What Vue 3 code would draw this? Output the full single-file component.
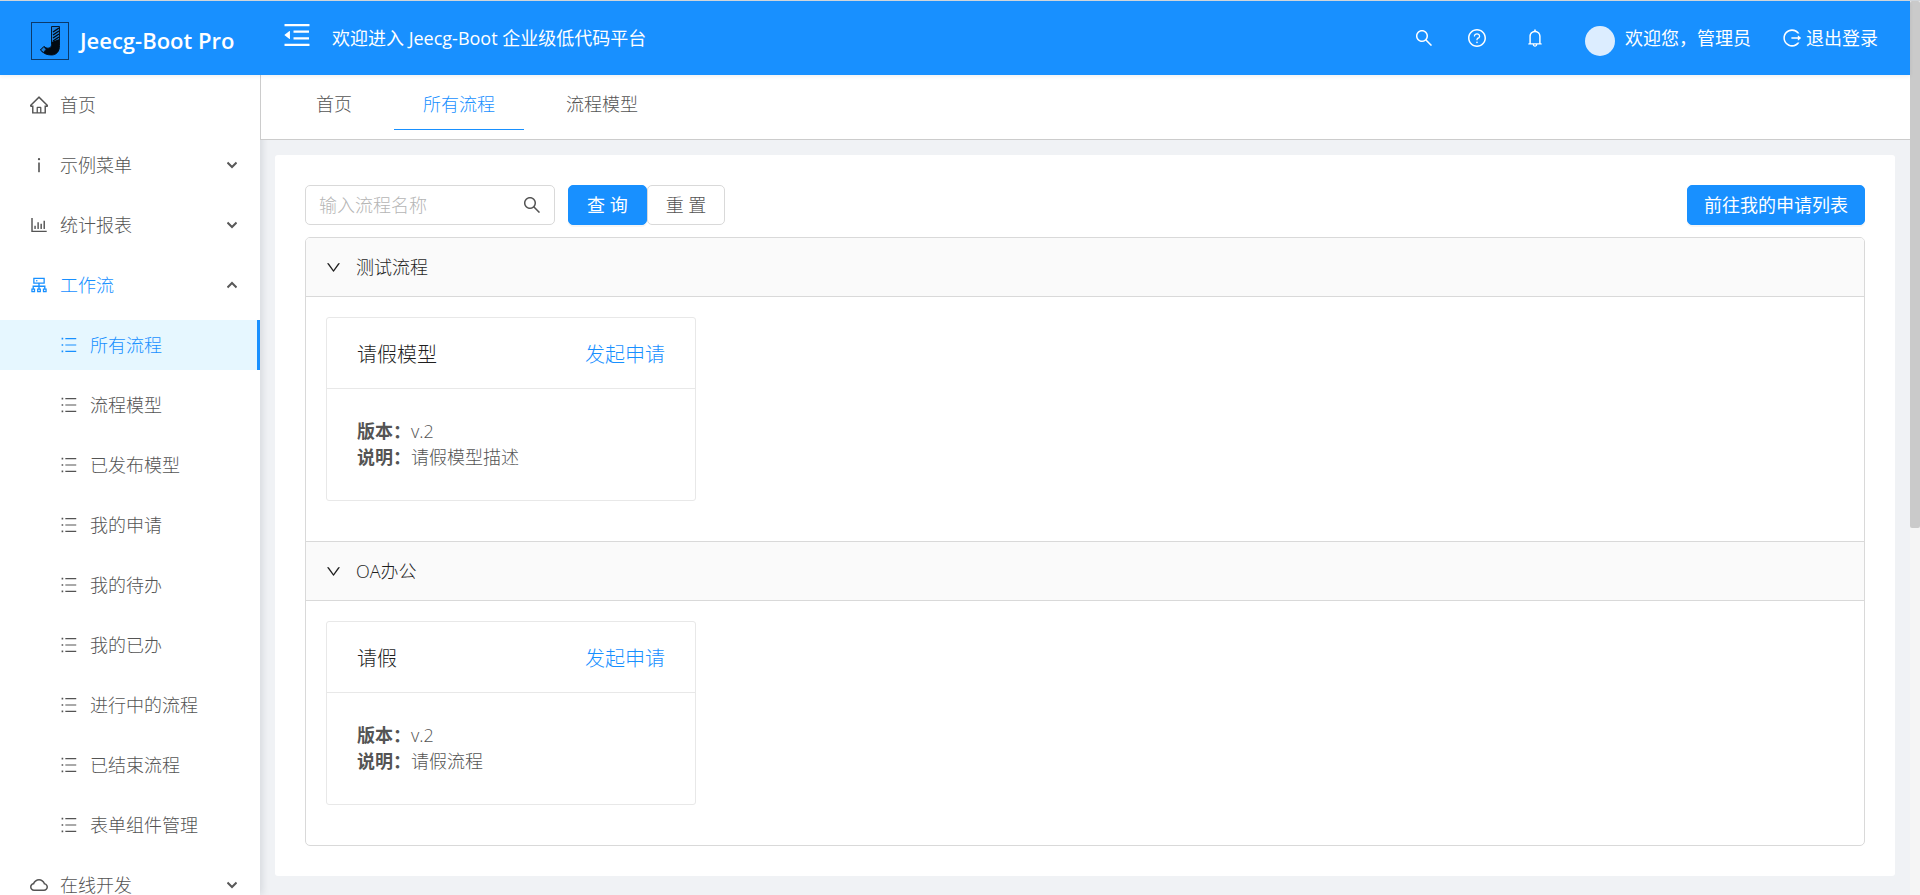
<script setup>
import { ref } from 'vue'

const icons = {
  search: 'M909.6 854.5L649.9 594.8C690.2 542.7 712 479 712 412c0-80.2-31.3-155.4-87.9-212.1-56.6-56.7-132-87.9-212.1-87.9s-155.5 31.3-212.1 87.9C143.2 256.5 112 331.8 112 412c0 80.1 31.3 155.5 87.9 212.1C256.5 680.8 331.8 712 412 712c67 0 130.6-21.8 182.7-62l259.7 259.6a8.2 8.2 0 0 0 11.6 0l43.6-43.5a8.2 8.2 0 0 0 0-11.6zM570.4 570.4C528 612.7 471.8 636 412 636s-116-23.3-158.4-65.6C211.3 528 188 471.8 188 412s23.3-116.1 65.6-158.4C296 211.3 352.2 188 412 188s116.1 23.2 158.4 65.6S636 352.2 636 412s-23.3 116.1-65.6 158.4z',
  question: 'M512 64C264.6 64 64 264.6 64 512s200.6 448 448 448 448-200.6 448-448S759.4 64 512 64zm0 820c-205.4 0-372-166.6-372-372s166.6-372 372-372 372 166.6 372 372-166.6 372-372 372zM623.6 316.7C593.6 290.4 554 276 512 276s-81.6 14.5-111.6 40.7C369.2 344 352 380.7 352 420v7.6c0 4.4 3.6 8 8 8h48c4.4 0 8-3.6 8-8V420c0-44.1 43.1-80 96-80s96 35.9 96 80c0 31.1-22 59.6-56.1 72.7-21.2 8.1-39.2 22.3-52.1 40.9-13.1 19-19.9 41.8-19.9 64.9V620c0 4.4 3.6 8 8 8h48c4.4 0 8-3.6 8-8v-22.7a48.3 48.3 0 0 1 30.9-44.8c59-22.7 97.1-74.7 97.1-132.5.1-39.3-17.1-76-48.3-103.3zM472 732a40 40 0 1 0 80 0 40 40 0 1 0-80 0z',
  bell: 'M816 768h-24V428c0-141.1-104.3-257.8-240-277.2V112c0-22.1-17.9-40-40-40s-40 17.9-40 40v38.8C336.3 170.2 232 286.9 232 428v340h-24c-17.7 0-32 14.3-32 32v32c0 4.4 3.6 8 8 8h216c0 61.8 50.2 112 112 112s112-50.2 112-112h216c4.4 0 8-3.6 8-8v-32c0-17.7-14.3-32-32-32zM512 888c-26.5 0-48-21.5-48-48h96c0 26.5-21.5 48-48 48zM304 768V428c0-55.6 21.6-107.8 60.9-147.1S456.4 220 512 220c55.6 0 107.8 21.6 147.1 60.9S720 372.4 720 428v340H304z',
  logout: 'M868 732h-70.3c-4.8 0-9.3 2.1-12.3 5.8-7 8.5-14.5 16.7-22.4 24.5a353.84 353.84 0 0 1-112.7 75.9A352.8 352.8 0 0 1 512.4 866c-47.9 0-94.3-9.4-137.9-27.8a353.84 353.84 0 0 1-112.7-75.9 353.28 353.28 0 0 1-76-112.5C167.3 606.2 158 559.9 158 512s9.4-94.2 27.8-137.8c17.8-42.1 43.4-80 76-112.5s70.5-58.1 112.7-75.9c43.6-18.4 90-27.8 137.9-27.8 47.9 0 94.3 9.3 137.9 27.8 42.2 17.8 80.1 43.4 112.7 75.9 7.9 7.9 15.3 16.1 22.4 24.5 3 3.7 7.6 5.8 12.3 5.8H868c6.3 0 10.2-7 6.7-12.3C798 160.5 663.8 81.6 511.3 82 271.7 82.6 79.6 277.1 82 516.4 84.4 751.9 276.2 942 512.4 942c152.1 0 285.7-78.8 362.3-197.7 3.4-5.3-.4-12.3-6.7-12.3zm88.9-226.3L815 393.7c-5.3-4.2-13-.4-13 6.3v76H488c-4.4 0-8 3.6-8 8v56c0 4.4 3.6 8 8 8h314v76c0 6.7 7.8 10.5 13 6.3l141.9-112a8 8 0 0 0 0-12.6z',
  fold: 'M408 442h480c4.4 0 8-3.6 8-8v-56c0-4.4-3.6-8-8-8H408c-4.4 0-8 3.6-8 8v56c0 4.4 3.6 8 8 8zm-8 204c0 4.4 3.6 8 8 8h480c4.4 0 8-3.6 8-8v-56c0-4.4-3.6-8-8-8H408c-4.4 0-8 3.6-8 8v56zm504-486H120c-4.4 0-8 3.6-8 8v56c0 4.4 3.6 8 8 8h784c4.4 0 8-3.6 8-8v-56c0-4.4-3.6-8-8-8zm0 632H120c-4.4 0-8 3.6-8 8v56c0 4.4 3.6 8 8 8h784c4.4 0 8-3.6 8-8v-56c0-4.4-3.6-8-8-8zM115.4 518.9L271.7 642c5.8 4.6 14.4.5 14.4-6.9V388.9c0-7.4-8.5-11.5-14.4-6.9L115.4 505.1a8.74 8.74 0 0 0 0 13.8z',
  home: 'M946.5 505L560.1 118.8l-25.9-25.9a31.5 31.5 0 0 0-44.4 0L77.5 505a63.9 63.9 0 0 0-18.8 46c.4 35.2 29.7 63.3 64.9 63.3h42.5V940h691.8V614.3h43.4c17.1 0 33.2-6.7 45.3-18.8a63.6 63.6 0 0 0 18.7-45.3c0-17-6.7-33.1-18.8-45.2zM568 868H456V664h112v204zm217.9-325.7V868H632V640c0-22.1-17.9-40-40-40H432c-22.1 0-40 17.9-40 40v228H238.1V542.3h-96l370-369.7 23.1 23.1L882 542.3h-96.1z',
  info: 'M456 224a56 56 0 1 0 112 0 56 56 0 1 0-112 0zm88 168h-64c-4.4 0-8 3.6-8 8v464c0 4.4 3.6 8 8 8h64c4.4 0 8-3.6 8-8V400c0-4.4-3.6-8-8-8z',
  chart: 'M888 792H200V168c0-4.4-3.6-8-8-8h-56c-4.4 0-8 3.6-8 8v688c0 4.4 3.6 8 8 8h752c4.4 0 8-3.6 8-8v-56c0-4.4-3.6-8-8-8zm-600-80h56c4.4 0 8-3.6 8-8V560c0-4.4-3.6-8-8-8h-56c-4.4 0-8 3.6-8 8v144c0 4.4 3.6 8 8 8zm152 0h56c4.4 0 8-3.6 8-8V384c0-4.4-3.6-8-8-8h-56c-4.4 0-8 3.6-8 8v320c0 4.4 3.6 8 8 8zm152 0h56c4.4 0 8-3.6 8-8V462c0-4.4-3.6-8-8-8h-56c-4.4 0-8 3.6-8 8v242c0 4.4 3.6 8 8 8zm152 0h56c4.4 0 8-3.6 8-8V304c0-4.4-3.6-8-8-8h-56c-4.4 0-8 3.6-8 8v400c0 4.4 3.6 8 8 8z',
  cluster: 'M888 680h-54V540H546v-92h238c8.8 0 16-7.2 16-16V168c0-8.8-7.2-16-16-16H240c-8.8 0-16 7.2-16 16v264c0 8.8 7.2 16 16 16h238v92H190v140h-54c-4.4 0-8 3.6-8 8v176c0 4.4 3.6 8 8 8h176c4.4 0 8-3.6 8-8V688c0-4.4-3.6-8-8-8h-54v-72h220v72h-54c-4.4 0-8 3.6-8 8v176c0 4.4 3.6 8 8 8h176c4.4 0 8-3.6 8-8V688c0-4.4-3.6-8-8-8h-54v-72h220v72h-54c-4.4 0-8 3.6-8 8v176c0 4.4 3.6 8 8 8h176c4.4 0 8-3.6 8-8V688c0-4.4-3.6-8-8-8zM256 808h-64v-64h64v64zm288 0h-64v-64h64v64zM288 384V216h448v168H288zm544 424h-64v-64h64v64zM360 300a40 40 0 1 0 80 0 40 40 0 1 0-80 0z',
  cloud: 'M811.4 418.7C765.6 297.9 648.9 212 512.2 212S258.8 297.8 213 418.6C127.3 441.1 64 519.1 64 612c0 110.5 89.5 200 199.9 200h496.2C870.5 812 960 722.5 960 612c0-92.7-63.1-170.7-148.6-193.3zm36.3 281a123.07 123.07 0 0 1-87.6 36.3H263.9c-33.1 0-64.2-12.9-87.6-36.3A123.3 123.3 0 0 1 140 612c0-28 9.1-54.3 26.2-76.3a125.7 125.7 0 0 1 66.1-43.7l37.9-9.9 13.9-36.6c8.6-22.8 20.6-44.1 35.7-63.4a245.6 245.6 0 0 1 52.4-49.9c41.1-28.9 89.5-44.2 140-44.2s98.9 15.3 140 44.2c19.9 14 37.5 30.8 52.4 49.9 15.1 19.3 27.1 40.7 35.7 63.4l13.8 36.5 37.8 10c54.3 14.5 92.1 63.8 92.1 120 0 33.1-12.9 64.3-36.3 87.7z',
  list: 'M872 168H330v56h542zM872 484H330v56h542zM872 800H330v56h542zM144 156h80v80h-80zM144 472h80v80h-80zM144 788h80v80h-80z',
  down: 'M884 256h-75c-5.1 0-9.9 2.5-12.9 6.6L512 654.2 227.9 262.6c-3-4.1-7.8-6.6-12.9-6.6h-75c-6.5 0-10.3 7.4-6.5 12.7l352.6 486.1c12.8 17.6 39 17.6 51.7 0l352.6-486.1c3.9-5.3.1-12.7-6.4-12.7z'
}

const menu = [
  { label: '首页', icon: 'home' },
  { label: '示例菜单', icon: 'info', arrow: 'down' },
  { label: '统计报表', icon: 'chart', arrow: 'down' },
  { label: '工作流', icon: 'cluster', arrow: 'up', open: true },
  { label: '所有流程', icon: 'list', sub: true, selected: true },
  { label: '流程模型', icon: 'list', sub: true },
  { label: '已发布模型', icon: 'list', sub: true },
  { label: '我的申请', icon: 'list', sub: true },
  { label: '我的待办', icon: 'list', sub: true },
  { label: '我的已办', icon: 'list', sub: true },
  { label: '进行中的流程', icon: 'list', sub: true },
  { label: '已结束流程', icon: 'list', sub: true },
  { label: '表单组件管理', icon: 'list', sub: true },
  { label: '在线开发', icon: 'cloud', arrow: 'down' }
]

const tabs = ['首页', '所有流程', '流程模型']
const activeTab = ref('所有流程')
const keyword = ref('')

const groups = [
  { name: '测试流程', items: [{ title: '请假模型', version: 'v.2', desc: '请假模型描述' }] },
  { name: 'OA办公', items: [{ title: '请假', version: 'v.2', desc: '请假流程' }] }
]
</script>

<template>
  <div class="window">
    <div class="page">
      <header class="header">
        <a class="brand" href="#">
          <svg class="logo" viewBox="0 0 38 38" aria-hidden="true">
            <rect x="0.5" y="0.5" width="37" height="37" fill="none" stroke="#0b3a6b" />
            <path d="M20.5 4.5h8v19c0 6-3 9.5-8 9.5-4.5 0-8-1.5-11-5l3.500-3.500c2 1.5 3.500 2 5 1.500 1.700-.5 2.500-1.500 2.500-3.500z" fill="#1b80de" stroke="#06182b" />
            <path d="M20.5 20l8-3v7c0 5.500-3 9-8 9-4.500 0-7-1-9.500-3.500l3-4.500c2 1.500 3 1.500 4.500 1 1.500-.6 2-1.800 2-3.500z" fill="#020a12" />
            <path d="M22 10l6-4M22 13l6-4M22 16l6-4M22 19l6-4" stroke="#020a12" stroke-width="1.5" />
            <path d="M9.5 28l3.500-3.500 2 3-2.500 3z" fill="#1b80de" stroke="#06182b" />
          </svg>
          <span>Jeecg-Boot Pro</span>
        </a>
        <button class="fold" type="button" aria-label="收起菜单">
          <svg viewBox="64 64 896 896"><path :d="icons.fold" /></svg>
        </button>
        <span class="welcome">欢迎进入 Jeecg-Boot 企业级低代码平台</span>
        <div class="tools">
          <button class="tool" type="button" aria-label="搜索"><svg viewBox="64 64 896 896"><path :d="icons.search" /></svg></button>
          <a class="tool help" href="#" aria-label="帮助"><svg viewBox="64 64 896 896"><path :d="icons.question" /></svg></a>
          <button class="tool notice" type="button" aria-label="通知"><svg viewBox="64 64 896 896"><path :d="icons.bell" /></svg></button>
          <span class="avatar"></span>
          <span class="user">欢迎您，管理员</span>
          <a class="logout" href="#"><svg viewBox="64 64 896 896"><path :d="icons.logout" /></svg>退出登录</a>
        </div>
      </header>

      <div class="body">
        <nav class="sider">
          <a
            v-for="m in menu"
            :key="m.label + m.icon"
            href="#"
            class="item"
            :class="{ sub: m.sub, selected: m.selected, open: m.open }"
          >
            <svg class="item-icon" viewBox="64 64 896 896"><path :d="icons[m.icon]" /></svg>
            <span>{{ m.label }}</span>
            <svg v-if="m.arrow" class="chevron" viewBox="0 0 10 8">
              <path :d="m.arrow === 'down' ? 'M.5 1.5L5 6l4.5-4.5' : 'M.5 6.5L5 2l4.5 4.5'" />
            </svg>
          </a>
        </nav>

        <div class="content">
          <div class="tabs" role="tablist">
            <button
              v-for="t in tabs"
              :key="t"
              type="button"
              role="tab"
              class="tab"
              :class="{ active: t === activeTab }"
              :aria-selected="t === activeTab"
              @click="activeTab = t"
            >{{ t }}</button>
          </div>

          <main class="panel">
            <form class="toolbar" @submit.prevent>
              <label class="search">
                <input v-model="keyword" type="text" placeholder="输入流程名称" aria-label="流程名称" />
                <svg viewBox="64 64 896 896"><path :d="icons.search" /></svg>
              </label>
              <button class="btn primary" type="submit">查 询</button>
              <button class="btn" type="reset">重 置</button>
              <button class="btn primary apply" type="button">前往我的申请列表</button>
            </form>

            <div class="collapse">
              <section v-for="g in groups" :key="g.name" class="group">
                <button class="group-head" type="button" aria-expanded="true">
                  <svg viewBox="64 64 896 896"><path :d="icons.down" /></svg>
                  <span>{{ g.name }}</span>
                </button>
                <div class="group-body">
                  <article v-for="c in g.items" :key="c.title" class="card">
                    <div class="card-head">
                      <span>{{ c.title }}</span>
                      <a href="#">发起申请</a>
                    </div>
                    <div class="card-body">
                      <div><b>版本：</b>{{ c.version }}</div>
                      <div><b>说明：</b>{{ c.desc }}</div>
                    </div>
                  </article>
                </div>
              </section>
            </div>
          </main>
        </div>
      </div>
    </div>
    <div class="scrollbar"><div class="thumb"></div></div>
  </div>
</template>

<style>
body {
  overflow: hidden;
}
</style>

<style scoped>
.window {
  display: flex;
  height: 100vh;
  overflow: hidden;
  box-sizing: border-box;
  border-top: 1px solid #d0d5da;
  background: #f0f2f5;
  color: #545454;
  font-family: "Open Sans", "Noto Sans CJK SC", sans-serif;
  font-size: 18px;
  font-weight: 300;
  line-height: 26px;
}
.window *,
.window *::before {
  box-sizing: border-box;
}
button,
input {
  font: inherit;
  color: inherit;
  border: 0;
  padding: 0;
  background: none;
}
a {
  color: inherit;
  text-decoration: none;
}
svg {
  display: block;
  flex: none;
  fill: currentColor;
}
.page {
  flex: 1;
  min-width: 0;
  display: flex;
  flex-direction: column;
}
.scrollbar {
  width: 10px;
  background: #f5f5f5;
}
.thumb {
  height: 59%;
  border-radius: 2px;
  background: #cacaca;
}

/* header */
.header {
  position: relative;
  z-index: 2;
  flex: none;
  display: flex;
  align-items: center;
  height: 74px;
  padding-right: 32px;
  background: #1890ff;
  color: #fff;
  font-weight: 400;
  box-shadow: 0 1px 4px rgba(0, 21, 41, 0.08);
}
.brand {
  display: flex;
  align-items: center;
  gap: 11px;
  width: 252px;
  padding: 6px 0 0 31px;
  font-size: 22px;
  font-weight: 600;
}
.brand span {
  padding-bottom: 2px;
}
.logo {
  width: 38px;
  height: 38px;
}
.fold {
  margin: 0 21px 6px 31px;
}
.fold svg {
  width: 28px;
  height: 28px;
}
.tools {
  display: flex;
  align-items: center;
  margin-left: auto;
}
.tool svg,
.logout svg {
  width: 18px;
  height: 18px;
}
.help {
  margin-left: 35px;
}
.notice {
  margin-left: 40px;
}
.avatar {
  width: 30px;
  height: 30px;
  margin: 6px 10px 0 41px;
  border-radius: 50%;
  background: #dcedff;
}
.logout {
  display: flex;
  align-items: center;
  gap: 5px;
  margin-left: 32px;
}

/* side menu */
.body {
  flex: 1;
  min-height: 0;
  display: flex;
}
.sider {
  position: relative;
  flex: none;
  width: 260px;
  padding-top: 5px;
  background: #fff;
  box-shadow: 2px 0 8px rgba(0, 21, 41, 0.12);
}
.item {
  display: flex;
  align-items: center;
  gap: 12px;
  height: 50px;
  margin-bottom: 10px;
  padding: 0 23px 0 30px;
  line-height: 20px;
}
.item-icon {
  width: 18px;
  height: 18px;
}
.sub {
  padding-left: 60px;
}
.open {
  color: #1890ff;
}
.selected {
  color: #1890ff;
  background: #e6f7ff;
  border-right: 3px solid #1890ff;
}
.chevron {
  width: 10px;
  height: 8px;
  margin-left: auto;
  fill: none;
  stroke: #595959;
  stroke-width: 2;
}

/* tabs */
.content {
  position: relative;
  flex: 1;
  min-width: 0;
}
.tabs {
  position: relative;
  display: flex;
  gap: 13px;
  height: 65px;
  padding: 5px 0 9px 26px;
  background: #fff;
  border-left: 1px solid #ccc;
  border-bottom: 1px solid #ccc;
}
.tab {
  padding: 0 29px 2px;
  border-bottom: 1px solid transparent;
}
.tab.active {
  color: #1890ff;
  border-color: #1890ff;
}

/* panel */
.panel {
  margin: 15px 15px 0;
  padding: 30px;
  background: #fff;
  border-radius: 3px;
}
.toolbar {
  display: flex;
  margin-bottom: 12px;
}
.search {
  display: flex;
  align-items: center;
  width: 250px;
  height: 40px;
  margin-right: 13px;
  padding: 0 13px;
  border: 1px solid #d9d9d9;
  border-radius: 5px;
}
.search input {
  flex: 1;
  min-width: 0;
  outline: none;
}
.search input::placeholder {
  color: #b5b5b5;
  opacity: 1;
}
.search svg {
  width: 18px;
  height: 18px;
}
.btn {
  height: 40px;
  padding: 0 18px;
  border: 1px solid #d9d9d9;
  border-radius: 5px;
  background: #fff;
}
.primary {
  color: #fff;
  font-weight: 400;
  background: #1890ff;
  border-color: #1890ff;
  box-shadow: 0 2px 0 rgba(0, 0, 0, 0.04);
}
.apply {
  margin-left: auto;
  padding: 0 16px;
}
.collapse {
  border: 1px solid #d9d9d9;
  border-radius: 5px;
  overflow: hidden;
}
.group + .group {
  border-top: 1px solid #d9d9d9;
}
.group-head {
  display: flex;
  align-items: center;
  gap: 15px;
  width: 100%;
  height: 59px;
  padding-left: 20px;
  color: #1f1f1f;
  background: #fafafa;
  border-bottom: 1px solid #d9d9d9;
}
.group-head svg {
  width: 15px;
  height: 15px;
}
.group-body {
  padding: 20px 20px 40px;
}
.card {
  width: 370px;
  border: 1px solid #e8e8e8;
  border-radius: 3px;
}
.card-head {
  display: flex;
  align-items: center;
  justify-content: space-between;
  height: 71px;
  padding: 3px 30px 0;
  color: #1f1f1f;
  font-size: 20px;
  border-bottom: 1px solid #e8e8e8;
}
.card-head a {
  color: #1890ff;
}
.card-body {
  padding: 29px 30px 30px;
}
.card-body b {
  font-weight: 700;
}
</style>
